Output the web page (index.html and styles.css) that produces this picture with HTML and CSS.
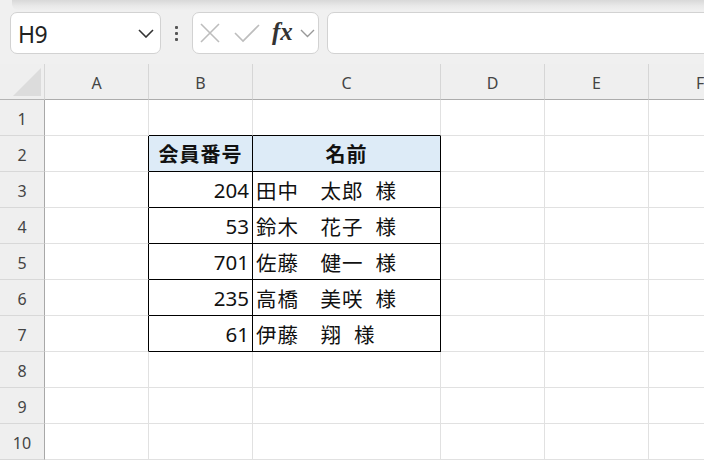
FILE: index.html
```html
<!DOCTYPE html>
<html lang="ja">
<head>
<meta charset="utf-8">
<link rel="stylesheet" href="styles.css">
</head>
<body>
<div class="top"><div class="edge"></div></div>
<div class="fbar">
  <div class="namebox">
    <span class="ref">H9</span>
    <svg class="chev" width="16" height="9" viewBox="0 0 16 9"><path d="M1 1 L8 8 L15 1" fill="none" stroke="#333" stroke-width="1.6"/></svg>
  </div>
  <div class="dots"><i></i><i></i><i></i></div>
  <div class="fxbox">
    <svg width="20" height="20" viewBox="0 0 20 20"><path d="M1 1 L19 19 M19 1 L1 19" stroke="#bdbdbd" stroke-width="1.6" fill="none"/></svg>
    <svg width="26" height="20" viewBox="0 0 26 20"><path d="M1 10 L9 18 L25 2" stroke="#bdbdbd" stroke-width="1.6" fill="none"/></svg>
    <span class="fx">fx</span>
    <svg width="15" height="9" viewBox="0 0 15 9"><path d="M1 1 L7.5 7.5 L14 1" fill="none" stroke="#999" stroke-width="1.4"/></svg>
  </div>
  <div class="input"></div>
</div>
<div class="grid">
  <div class="corner"><div class="tri"></div></div>
  <div class="ch">A</div><div class="ch">B</div><div class="ch">C</div><div class="ch">D</div><div class="ch">E</div><div class="ch last">F</div>

  <div class="rh">1</div><div class="c"></div><div class="c bb"></div><div class="c bb"></div><div class="c"></div><div class="c"></div><div class="c"></div>

  <div class="rh">2</div><div class="c br"></div><div class="c t th">会員番号</div><div class="c t th">名前</div><div class="c"></div><div class="c"></div><div class="c"></div>

  <div class="rh">3</div><div class="c br"></div><div class="c t num">204</div><div class="c t nm">田中　太郎<span class="sp"></span>様</div><div class="c"></div><div class="c"></div><div class="c"></div>

  <div class="rh">4</div><div class="c br"></div><div class="c t num">53</div><div class="c t nm">鈴木　花子<span class="sp"></span>様</div><div class="c"></div><div class="c"></div><div class="c"></div>

  <div class="rh">5</div><div class="c br"></div><div class="c t num">701</div><div class="c t nm">佐藤　健一<span class="sp"></span>様</div><div class="c"></div><div class="c"></div><div class="c"></div>

  <div class="rh">6</div><div class="c br"></div><div class="c t num">235</div><div class="c t nm">高橋　美咲<span class="sp"></span>様</div><div class="c"></div><div class="c"></div><div class="c"></div>

  <div class="rh">7</div><div class="c br"></div><div class="c t num">61</div><div class="c t nm">伊藤　翔<span class="sp"></span>様</div><div class="c"></div><div class="c"></div><div class="c"></div>

  <div class="rh">8</div><div class="c"></div><div class="c"></div><div class="c"></div><div class="c"></div><div class="c"></div><div class="c"></div>

  <div class="rh">9</div><div class="c"></div><div class="c"></div><div class="c"></div><div class="c"></div><div class="c"></div><div class="c"></div>

  <div class="rh">10</div><div class="c"></div><div class="c"></div><div class="c"></div><div class="c"></div><div class="c"></div><div class="c"></div>
</div>
</body>
</html>
```
FILE: styles.css
```css
* { box-sizing: border-box; }
html, body { margin: 0; padding: 0; }
body {
  width: 704px;
  height: 460px;
  overflow: hidden;
  background: #f0f0f0;
  font-family: "Noto Sans", "Noto Sans CJK JP", sans-serif;
}
.top { height: 12px; }
.edge {
  margin-left: 12px;
  height: 10px;
  background: linear-gradient(#d8d8d8, #e9e9e9 60%, #efefef);
  border-bottom-left-radius: 6px;
}
.fbar {
  height: 52px;
  display: flex;
  align-items: flex-start;
  padding-left: 10px;
}
.namebox {
  width: 151px;
  height: 42px;
  background: #fff;
  border: 1px solid #d2d2d2;
  border-radius: 7px;
  display: flex;
  align-items: center;
  justify-content: space-between;
  padding: 0 6px 0 7px;
}
.ref { font-size: 23px; color: #222; font-weight: 400; letter-spacing: -0.5px; margin-top: 2px; }
.chev { margin-top: 1px; }
.dots {
  width: 31px;
  height: 42px;
  display: flex;
  flex-direction: column;
  align-items: center;
  justify-content: center;
  gap: 3px;
}
.dots i { width: 3px; height: 3px; background: #555; border-radius: 1px; display: block; }
.fxbox {
  width: 127px;
  height: 42px;
  background: #fff;
  border: 1px solid #d2d2d2;
  border-radius: 7px;
  display: flex;
  align-items: center;
  padding-left: 7px;
}
.fxbox svg:nth-child(1) { margin-right: 14px; }
.fxbox svg:nth-child(2) { margin-right: 12px; }
.fx {
  font-family: "Liberation Serif", "DejaVu Serif", serif;
  font-style: italic;
  font-weight: bold;
  font-size: 25px;
  color: #333;
  margin-right: 7px;
  margin-top: -2px;
}
.input {
  flex: 1;
  margin-left: 8px;
  margin-right: -10px;
  height: 42px;
  background: #fff;
  border: 1px solid #d2d2d2;
  border-radius: 7px;
}
.grid {
  display: grid;
  grid-template-columns: 45px 104px 104px 188px 104px 104px 1fr;
  grid-template-rows: repeat(11, 36px);
}
.corner {
  background: #efefef;
  border-right: 1px solid #d6d6d6;
  border-bottom: 1px solid #b4b4b4;
  position: relative;
}
.tri {
  position: absolute;
  left: 13px;
  top: 4px;
  width: 28px;
  height: 28px;
  background: #dcdcdc;
  clip-path: polygon(100% 0, 100% 100%, 0 100%);
}
.ch {
  background: #efefef;
  border-right: 1px solid #d6d6d6;
  border-bottom: 1px solid #acacac;
  display: flex;
  align-items: center;
  justify-content: center;
  font-size: 16px;
  color: #444;
  padding-top: 3px;
}
.ch.last { justify-content: flex-start; padding-left: 47px; }
.rh {
  background: #efefef;
  border-right: 1px solid #a8a8a8;
  border-bottom: 1px solid #d8d8d8;
  display: flex;
  align-items: center;
  justify-content: center;
  font-size: 16px;
  color: #444;
  padding-top: 2px;
}
.c {
  background: #fff;
  border-right: 1px solid #e1e1e1;
  border-bottom: 1px solid #e1e1e1;
  display: flex;
  align-items: center;
  font-size: 20px;
  color: #111;
  white-space: nowrap;
}
.c.bb { border-bottom-color: #000; }
.c.br { border-right-color: #000; }
.c.t { border-right-color: #000; border-bottom-color: #000; }
.th {
  background: #ddebf7;
  justify-content: center;
  font-family: "Noto Sans CJK JP", sans-serif;
  font-weight: bold;
  font-size: 20px;
  letter-spacing: 1px;
}
.num { justify-content: flex-end; padding-right: 3px; font-size: 20.5px; }
.nm {
  padding-left: 3px;
  font-family: "Noto Sans CJK JP", sans-serif;
  font-size: 20.5px;
  letter-spacing: 1px;
}
.sp { display: inline-block; width: 12px; }
```
